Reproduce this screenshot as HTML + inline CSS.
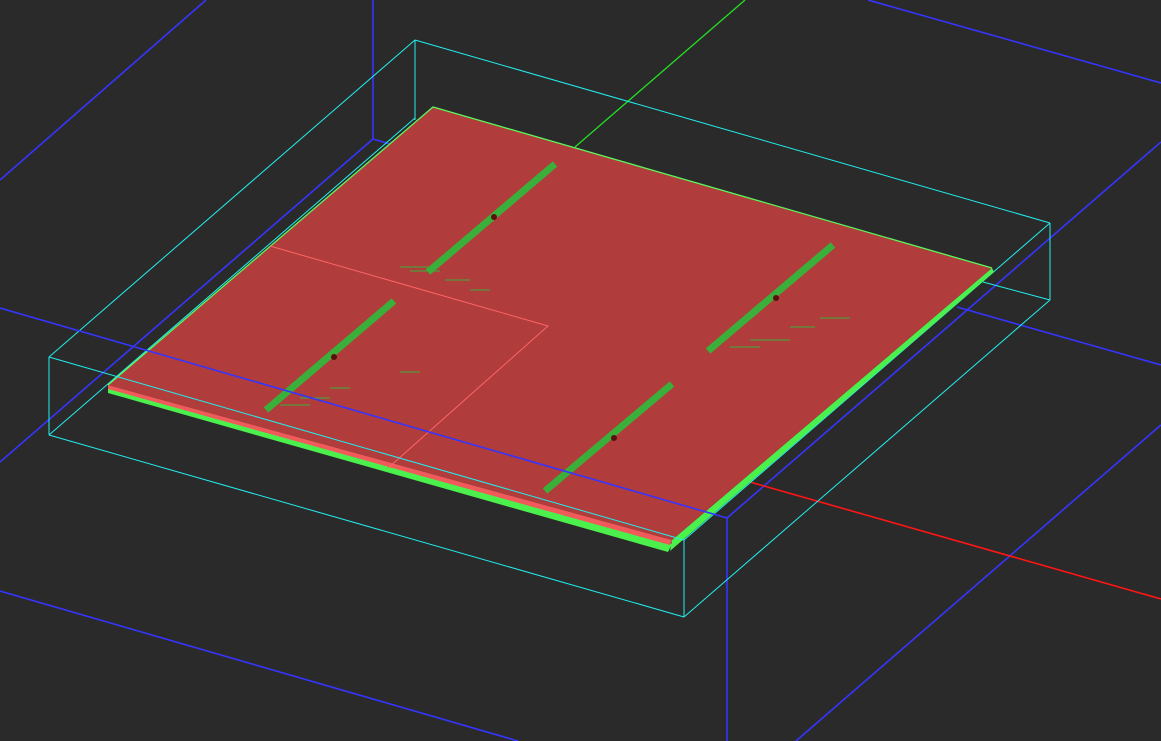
<!DOCTYPE html>
<html><head><meta charset="utf-8"><style>html,body{margin:0;padding:0;background:#2a2a2a;overflow:hidden}svg{display:block}</style></head>
<body>
<svg width="1161" height="741" viewBox="0 0 1161 741" xmlns="http://www.w3.org/2000/svg">
<rect width="1161" height="741" fill="#2a2a2a"/>
<g stroke="#3535ff" stroke-width="1.6" fill="none">
<line x1="206" y1="0" x2="0" y2="180"/>
<line x1="373" y1="0" x2="373" y2="139"/>
<line x1="373" y1="139" x2="0" y2="462"/>
<line x1="373" y1="139" x2="390" y2="144"/>
<line x1="727" y1="518" x2="727" y2="741"/>
<line x1="727" y1="518" x2="1161" y2="142"/>
<line x1="868" y1="0" x2="1161" y2="83"/>
<line x1="957" y1="307" x2="1161" y2="365"/>
<line x1="1161" y1="425" x2="796" y2="741"/>
<line x1="0" y1="591" x2="518" y2="741"/>
</g>
<line x1="750" y1="482" x2="1161" y2="599" stroke="#ff1515" stroke-width="1.6"/>
<line x1="745" y1="0" x2="575" y2="147" stroke="#22e022" stroke-width="1.3"/>
<g stroke="#22eeee" stroke-width="1" fill="none">
<line x1="415" y1="40" x2="415" y2="120"/>
<line x1="415" y1="40" x2="1050" y2="223"/>
<line x1="1050" y1="223" x2="1050" y2="300"/>
<line x1="1050" y1="300" x2="983" y2="282"/>
<line x1="1050" y1="223" x2="684" y2="540"/>
<line x1="1050" y1="300" x2="684" y2="617"/>
<line x1="684" y1="540" x2="684" y2="617"/>
<line x1="415" y1="40" x2="49" y2="357"/>
<line x1="49" y1="357" x2="49" y2="435"/>
<line x1="49" y1="435" x2="684" y2="617"/>
<line x1="49" y1="435" x2="415" y2="118"/>
</g>
<!-- plate -->
<polygon points="108,388 672,544 668,552 108,393" fill="#4cf04c"/>
<polygon points="108,385 672,540 670,545 108,389" fill="#f05a5a"/>
<polygon points="672,540 992,268 994,272 670,551" fill="#4cf04c"/>
<polygon points="433,107 992,268 672,540 108,385" fill="#b03c3c"/>
<polyline points="108,385 433,107 992,268" fill="none" stroke="#5cf55c" stroke-width="1.3"/>
<polyline points="270,246 548,326 388,468" fill="none" stroke="#ff6464" stroke-width="1"/>
<g stroke="#3ab03a" stroke-width="7">
<line x1="555" y1="164" x2="428" y2="272"/>
<line x1="394" y1="301" x2="266" y2="410"/>
<line x1="833" y1="245" x2="708" y2="351"/>
<line x1="672" y1="384" x2="545" y2="491"/>
</g>
<g stroke="#3ab03a" stroke-width="1">
<line x1="400" y1="267" x2="430" y2="267"/><line x1="410" y1="271" x2="440" y2="271"/>
<line x1="445" y1="280" x2="470" y2="280"/><line x1="470" y1="290" x2="490" y2="290"/>
<line x1="730" y1="347" x2="760" y2="347"/><line x1="750" y1="340" x2="790" y2="340"/>
<line x1="790" y1="327" x2="815" y2="327"/><line x1="820" y1="318" x2="850" y2="318"/>
<line x1="280" y1="405" x2="310" y2="405"/><line x1="300" y1="398" x2="330" y2="398"/>
<line x1="330" y1="388" x2="350" y2="388"/><line x1="400" y1="372" x2="420" y2="372"/>
</g>
<g fill="#5a0f0f">
<circle cx="494" cy="217" r="3"/><circle cx="334" cy="357" r="3"/>
<circle cx="776" cy="298" r="3"/><circle cx="614" cy="438" r="3"/>
</g>
<line x1="0" y1="308" x2="727" y2="518" stroke="#3535ff" stroke-width="1.6"/>
<line x1="49" y1="357" x2="684" y2="540" stroke="#22eeee" stroke-width="1"/>
</svg>
</body></html>
